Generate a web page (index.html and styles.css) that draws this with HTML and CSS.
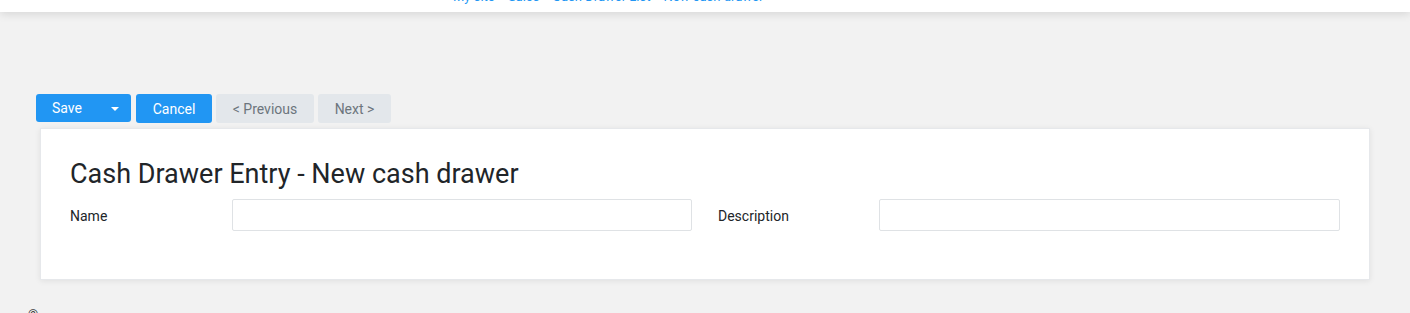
FILE: index.html
```html
<!DOCTYPE html>
<html lang="en">
<head>
<meta charset="utf-8">
<title>Cash Drawer Entry</title>
<link rel="stylesheet" href="styles.css">
</head>
<body>
<header class="topbar">
  <nav class="crumbs">
    <a href="#">My site</a><span class="sep">›</span>
    <a href="#">Sales</a><span class="sep">›</span>
    <a href="#">Cash Drawer List</a><span class="sep">›</span>
    <a href="#">New cash drawer</a>
  </nav>
</header>
<main class="page">
  <div class="toolbar">
    <div class="split">
      <button class="btn btn-primary btn-main">Save</button>
      <button class="btn btn-primary btn-caret"><span class="caret"></span></button>
    </div>
    <button class="btn btn-primary btn-cancel">Cancel</button>
    <button class="btn btn-light btn-prev">&lt; Previous</button>
    <button class="btn btn-light btn-next">Next &gt;</button>
  </div>
  <section class="card">
    <h1 class="title">Cash Drawer Entry - New cash drawer</h1>
    <div class="form-row">
      <div class="field field-left">
        <label class="label">Name</label>
        <input class="input" type="text">
      </div>
      <div class="field field-right">
        <label class="label">Description</label>
        <input class="input" type="text">
      </div>
    </div>
  </section>
  <footer class="footer">©</footer>
</main>
</body>
</html>
```
FILE: styles.css
```css
* { box-sizing: border-box; }
html, body {
  margin: 0;
  padding: 0;
  height: 100%;
  overflow: hidden;
}
body {
  background: #f2f2f2;
  font-family: Roboto, "Liberation Sans", Arial, sans-serif;
  color: #212529;
}
.topbar {
  position: relative;
  z-index: 2;
  height: 12px;
  background: #fff;
  box-shadow: 0 2px 10px rgba(0, 0, 0, 0.12);
  overflow: hidden;
}
.crumbs {
  padding-left: 453px;
  margin-top: -11px;
  font-size: 13px;
  line-height: 15px;
  white-space: nowrap;
}
.crumbs a {
  color: #2196f3;
  text-decoration: none;
}
.crumbs .sep {
  color: #9aa0a6;
  margin: 0 3px;
}
.page {
  padding: 82px 40px 0 36px;
}
.toolbar {
  display: flex;
  gap: 4px;
  align-items: flex-start;
}
.split {
  display: flex;
  margin-right: 1px;
}
.btn {
  font-family: Roboto, "Liberation Sans", Arial, sans-serif;
  font-size: 14px;
  height: 28px;
  line-height: 28px;
  padding: 0;
  border: 0;
  border-radius: 3px;
  cursor: pointer;
  text-align: center;
}
.btn-primary {
  background: #2196f3;
  color: #fff;
}
.btn-light {
  background: #e3e7eb;
  color: #6c757d;
  height: 29px;
}
.btn-cancel { width: 76px; height: 29px; }
.btn-prev { width: 98px; }
.btn-next { width: 73px; }
.btn-main {
  width: 62px;
  padding-left: 16px;
  text-align: left;
  border-radius: 3px 0 0 3px;
}
.btn-caret {
  width: 33px;
  border-radius: 0 3px 3px 0;
  display: flex;
  align-items: center;
  justify-content: center;
}
.caret {
  width: 0;
  height: 0;
  border-left: 4px solid transparent;
  border-right: 4px solid transparent;
  border-top: 4px solid #fff;
  margin-top: 1px;
}
.card {
  margin: 5px 0 0 4px;
  background: #fff;
  border: 1px solid #e6e8eb;
  box-shadow: 0 1px 6px rgba(0, 0, 0, 0.08);
  padding: 28px 29px 48px 29px;
}
.title {
  margin: 0 0 8px;
  font-size: 27px;
  font-weight: 400;
  line-height: 34px;
  color: #212529;
}
.form-row {
  display: grid;
  grid-template-columns: 1fr 1fr;
  column-gap: 26px;
}
.field {
  display: flex;
  align-items: center;
}
.label {
  font-size: 14px;
  line-height: 16px;
  padding-top: 2px;
  color: #212529;
  flex: 0 0 auto;
}
.field-left .label { width: 162px; }
.field-right .label { width: 161px; }
.input {
  flex: 1;
  min-width: 0;
  height: 32px;
  border: 1px solid #dfe2e5;
  border-radius: 2px;
  background: #fff;
  font-size: 14px;
  padding: 0 8px;
}
.footer {
  margin: 27px 0 0 -8px;
  font-size: 13px;
  color: #333;
}
```
